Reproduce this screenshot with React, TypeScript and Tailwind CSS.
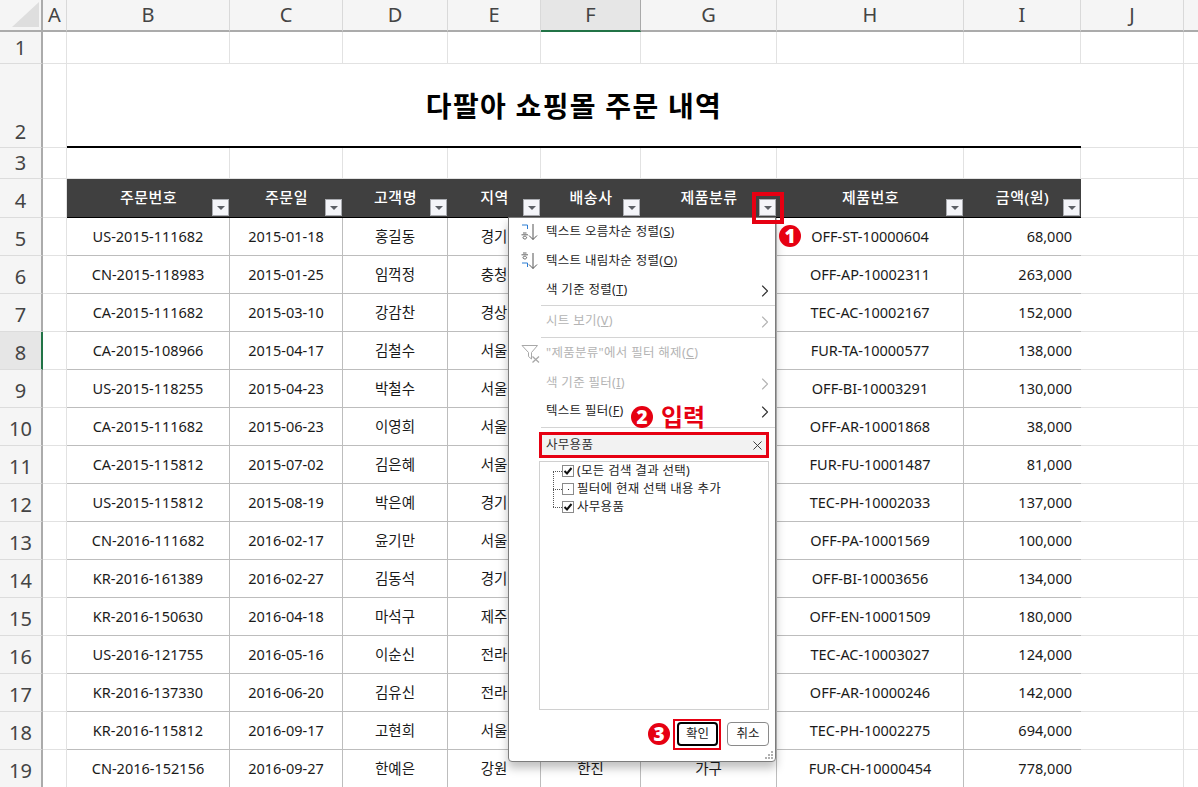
import { ChevronRight, X } from "lucide-react";

const rows = [
  ["US-2015-111682", "2015-01-18", "홍길동", "경기", "", "", "OFF-ST-10000604", "68,000"],
  ["CN-2015-118983", "2015-01-25", "임꺽정", "충청", "", "", "OFF-AP-10002311", "263,000"],
  ["CA-2015-111682", "2015-03-10", "강감찬", "경상", "", "", "TEC-AC-10002167", "152,000"],
  ["CA-2015-108966", "2015-04-17", "김철수", "서울", "", "", "FUR-TA-10000577", "138,000"],
  ["US-2015-118255", "2015-04-23", "박철수", "서울", "", "", "OFF-BI-10003291", "130,000"],
  ["CA-2015-111682", "2015-06-23", "이영희", "서울", "", "", "OFF-AR-10001868", "38,000"],
  ["CA-2015-115812", "2015-07-02", "김은혜", "서울", "", "", "FUR-FU-10001487", "81,000"],
  ["US-2015-115812", "2015-08-19", "박은예", "경기", "", "", "TEC-PH-10002033", "137,000"],
  ["CN-2016-111682", "2016-02-17", "윤기만", "서울", "", "", "OFF-PA-10001569", "100,000"],
  ["KR-2016-161389", "2016-02-27", "김동석", "경기", "", "", "OFF-BI-10003656", "134,000"],
  ["KR-2016-150630", "2016-04-18", "마석구", "제주", "", "", "OFF-EN-10001509", "180,000"],
  ["US-2016-121755", "2016-05-16", "이순신", "전라", "", "", "TEC-AC-10003027", "124,000"],
  ["KR-2016-137330", "2016-06-20", "김유신", "전라", "", "", "OFF-AR-10000246", "142,000"],
  ["KR-2016-115812", "2016-09-17", "고현희", "서울", "", "", "TEC-PH-10002275", "694,000"],
  ["CN-2016-152156", "2016-09-27", "한예은", "강원", "한진", "가구", "FUR-CH-10000454", "778,000"],
];

const headers = ["주문번호", "주문일", "고객명", "지역", "배송사", "제품분류", "제품번호", "금액(원)"];
const colLetters = ["A", "B", "C", "D", "E", "F", "G", "H", "I", "J", ""];

function RowHead({ label, active, end, low }: { label: number; active?: boolean; end?: boolean; low?: boolean }) {
  return (
    <div
      className={`flex justify-center text-[20px] leading-none text-[#444] border-b border-b-[#dcdcdc] border-r-2 ${
        end ? "items-end pb-[5px]" : "items-center"
      } ${low ? "pt-[5px]" : ""} ${active ? "bg-[#e6e6e6] border-r-[#217346]" : "bg-[#f5f5f5] border-r-[#ababab]"}`}
    >
      {label}
    </div>
  );
}

function Blank({ last }: { last?: boolean }) {
  return <div className={`bg-white border-b border-b-[#e2e2e2] ${last ? "" : "border-r border-r-[#e2e2e2]"}`} />;
}

function FilterButton() {
  return (
    <div className="absolute right-[1px] bottom-[1px] w-[17px] h-[17px] bg-[#f4f5f9] border border-[#a9abb0] flex items-center justify-center">
      <div className="w-0 h-0 border-l-[4px] border-r-[4px] border-t-[4px] border-l-transparent border-r-transparent border-t-[#5c6066]" />
    </div>
  );
}

function Badge({ n, className }: { n: number; className: string }) {
  return (
    <div
      className={`absolute w-[22px] h-[22px] rounded-full bg-[#e60012] text-white flex items-center justify-center text-[19px] font-black leading-none ${className}`}
    >
      {n}
    </div>
  );
}

function MenuItem({
  label,
  hot,
  disabled,
  arrow,
  icon,
  h,
}: {
  label: string;
  hot: string;
  disabled?: boolean;
  arrow?: boolean;
  icon?: React.ReactNode;
  h: string;
}) {
  return (
    <div className={`relative flex items-center pl-[37px] text-[12.5px] shrink-0 ${h} ${disabled ? "text-[#b4b4b4]" : "text-[#262626]"}`}>
      {icon}
      <span className="tracking-[0.3px]">
        {label}(<u>{hot}</u>)
      </span>
      {arrow && (
        <ChevronRight size={20} strokeWidth={1.3} className={`ml-auto ${disabled ? "text-[#b4b4b4]" : "text-[#333]"}`} />
      )}
    </div>
  );
}

// 정렬 아이콘: 파란 쪽이 위/아래로 바뀜
function SortIcon({ blueTop }: { blueTop?: boolean }) {
  const blue = "M2 2H7.5V6";
  const gray = "M3 1H6.5M1.5 2.8H8M4.8 4.2a1.8 1.4 0 1 0 0.01 0";
  return (
    <svg className="absolute left-[11px] top-[5px]" width="18" height="18" viewBox="0 0 18 18" fill="none" strokeWidth="1">
      <path d={blue} stroke="#2b7cd3" transform={blueTop ? "translate(0 0)" : "translate(0 9)"} />
      <path d={gray} stroke="#666" transform={blueTop ? "translate(0 9)" : "translate(0 0)"} />
      <path d="M13 1V16.5M9 12.5L13 16.5L17 12.5" stroke="#555" />
    </svg>
  );
}

function Check({ checked }: { checked: boolean }) {
  return (
    <div className="w-[12px] h-[12px] border border-[#8a8a8a] bg-white flex items-center justify-center shrink-0">
      {checked ? (
        <svg width="10" height="10" viewBox="0 0 10 10" fill="none" stroke="#111" strokeWidth="2">
          <path d="M1.5 5L4 7.5L8.5 2" />
        </svg>
      ) : (
        <div className="w-[1px] h-[1px] bg-[#222]" />
      )}
    </div>
  );
}

function TreeRow({ label, checked }: { label: string; checked: boolean }) {
  return (
    <div className="flex items-center h-[18px] pl-[13px] text-[12.5px] text-[#262626] tracking-[0.3px]">
      <div className="w-[9px] border-t border-dotted border-t-[#555] shrink-0" />
      <Check checked={checked} />
      <span className="ml-[3px]">{label}</span>
    </div>
  );
}

function Separator() {
  return <div className="h-[1px] bg-[#d4d4d4] ml-[32px] shrink-0" />;
}

function FilterPopup() {
  return (
    <div className="absolute left-[508px] top-[217px] w-[268px] h-[545px] bg-white border border-[#7c7c7c] rounded-b-[4px] shadow-[0_6px_10px_rgba(0,0,0,0.25)] flex flex-col">
      <MenuItem h="h-[29px]" label="텍스트 오름차순 정렬" hot="S" icon={<SortIcon blueTop />} />
      <MenuItem h="h-[29px]" label="텍스트 내림차순 정렬" hot="O" icon={<SortIcon />} />
      <MenuItem h="h-[29px]" label="색 기준 정렬" hot="T" arrow />
      <Separator />
      <MenuItem h="h-[31px]" label="시트 보기" hot="V" arrow disabled />
      <Separator />
      <MenuItem
        h="h-[31px]"
        label={'"제품분류"에서 필터 해제'}
        hot="C"
        disabled
        icon={
          <svg className="absolute left-[12px] top-[6px]" width="20" height="20" viewBox="0 0 20 20" fill="none" stroke="#a8a8a8" strokeWidth="1">
            <path d="M1 1.5H16.5L10.5 8.5V15L7.5 12.5V8.5Z" />
            <path d="M11.5 12.5L18 18.5M18 12.5L11.5 18.5" strokeWidth="1.3" />
          </svg>
        }
      />
      <MenuItem h="h-[29px]" label="색 기준 필터" hot="I" arrow disabled />
      <MenuItem h="h-[29px] pb-[2px]" label="텍스트 필터" hot="F" arrow />
      <Separator />
      <div className="mt-[4px] ml-[30px] w-[230px] h-[26px] shrink-0 border-[3px] border-[#e60012] bg-[#f2f2f2] flex items-center pl-[4px] pr-[1px] text-[12.5px] text-[#333] tracking-[0.3px]">
        사무용품
        <X size={15} strokeWidth={1.5} className="ml-auto text-[#333]" />
      </div>
      <div className="relative mt-[3px] ml-[30px] w-[230px] h-[249px] shrink-0 border border-[#d0d0d0]">
        <div className="absolute left-[13px] top-[9px] h-[36px] border-l border-dotted border-l-[#555]" />
        <TreeRow label="(모든 검색 결과 선택)" checked />
        <TreeRow label="필터에 현재 선택 내용 추가" checked={false} />
        <TreeRow label="사무용품" checked />
      </div>
      <div className="flex justify-end gap-[9px] mt-[12px] mr-[6px]">
        <div className="w-[41px] h-[24px] border-2 border-black rounded-[4px] flex items-center justify-center text-[12.5px] text-[#222]">
          확인
        </div>
        <div className="w-[42px] h-[24px] border border-[#8a8a8a] rounded-[4px] flex items-center justify-center text-[12.5px] text-[#222]">
          취소
        </div>
      </div>
      <svg className="absolute right-[1px] bottom-[1px]" width="9" height="9" viewBox="0 0 9 9" fill="#b0b0b0">
        <rect x="6" y="0" width="2" height="2" />
        <rect x="3" y="3" width="2" height="2" />
        <rect x="6" y="3" width="2" height="2" />
        <rect x="0" y="6" width="2" height="2" />
        <rect x="3" y="6" width="2" height="2" />
        <rect x="6" y="6" width="2" height="2" />
      </svg>
    </div>
  );
}

export default function App() {
  return (
    <div className="relative w-[1198px] h-[787px] overflow-hidden bg-white font-['Noto_Sans','Noto_Sans_CJK_KR',sans-serif]">
      <div className="grid grid-cols-[43px_24px_163px_113px_105px_93px_100px_136px_187px_117px_103px_14px] grid-rows-[32px_32px_84px_31px_39px_repeat(15,38px)]">
        {/* column headers */}
        <div className="relative bg-[#f5f5f5] border-b-2 border-b-[#ababab] border-r-2 border-r-[#ababab]">
          <div className="absolute left-[12px] top-[2px] w-0 h-0 border-l-[27px] border-b-[25px] border-l-transparent border-b-[#dedede]" />
        </div>
        {colLetters.map((c, i) => (
          <div
            key={i}
            className={`flex items-center justify-center text-[20px] leading-none text-[#444] border-b-2 ${
              i === 10 ? "" : "border-r"
            } ${
              c === "F"
                ? "bg-[#e6e6e6] border-b-[#217346] border-r-[#a9a9a9]"
                : "bg-[#f5f5f5] border-b-[#ababab] border-r-[#d9d9d9]"
            }`}
          >
            {c}
          </div>
        ))}

        {/* row 1 */}
        <RowHead label={1} />
        {colLetters.map((_, i) => (
          <Blank key={i} last={i === 10} />
        ))}

        {/* row 2 with merged title */}
        <RowHead label={2} end />
        <Blank />
        <div className="col-span-8 flex items-center justify-center pt-[1px] border-b-2 border-b-black bg-white text-[28px] font-bold text-black tracking-[1.3px]">
          다팔아 쇼핑몰 주문 내역
        </div>
        <Blank />
        <Blank last />

        {/* row 3 */}
        <RowHead label={3} />
        {colLetters.map((_, i) => (
          <Blank key={i} last={i === 10} />
        ))}

        {/* row 4 table header */}
        <RowHead label={4} low />
        <Blank />
        {headers.map((h) => (
          <div
            key={h}
            className="relative flex items-center justify-center pb-[2px] bg-[#404040] border-b border-b-black text-white text-[15px] font-medium tracking-[0.5px]"
          >
            {h}
            <FilterButton />
          </div>
        ))}
        <Blank />
        <Blank last />

        {/* data rows */}
        {rows.map((r, i) => (
          <div key={i} className="contents">
            <RowHead label={i + 5} active={i === 3} low />
            <Blank />
            {r.map((v, j) => (
              <div
                key={j}
                className={`flex items-center bg-white border-b border-b-[#bdbdbd] text-[14.5px] text-[#1a1a1a] ${
                  j === 7 ? "justify-end pr-[9px]" : "justify-center"
                } ${j < 7 ? "border-r border-r-[#bdbdbd]" : ""}`}
              >
                {v}
              </div>
            ))}
            <Blank />
            <Blank last />
          </div>
        ))}
      </div>

      <FilterPopup />

      {/* annotations */}
      <div className="absolute left-[752px] top-[192px] w-[32px] h-[32px] border-[4px] border-[#e60012]" />
      <div className="absolute left-[673px] top-[719px] w-[48px] h-[31px] border-2 border-[#e60012]" />
      <Badge n={1} className="left-[779px] top-[225px]" />
      <Badge n={2} className="left-[631px] top-[406px]" />
      <Badge n={3} className="left-[648px] top-[723px]" />
      <div className="absolute left-[661px] top-[400px] text-[24px] leading-[34px] font-bold text-[#e60012]">입력</div>
    </div>
  );
}
